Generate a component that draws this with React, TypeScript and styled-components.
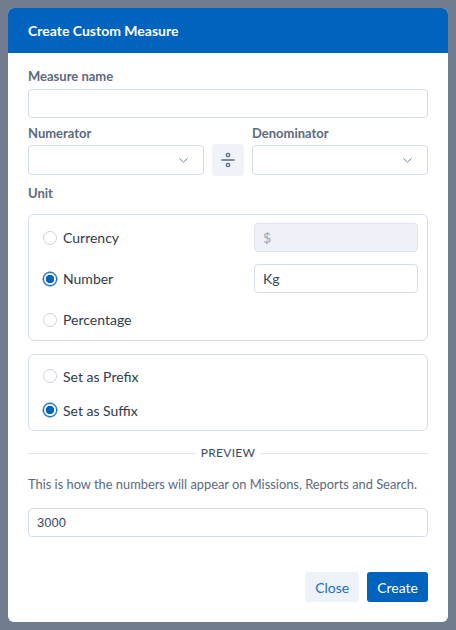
import React from "react";
import styled, { createGlobalStyle } from "styled-components";

const GlobalStyle = createGlobalStyle`
  html, body {
    margin: 0;
    padding: 0;
    background: #717d8e;
  }
  body {
    font-family: Lato, "Open Sans", sans-serif;
  }
`;

const Backdrop = styled.div`
  width: 456px;
  height: 630px;
  padding: 8px;
  box-sizing: border-box;
  background: #717d8e;
`;

const Modal = styled.div`
  width: 440px;
  height: 614px;
  background: #fff;
  border-radius: 6px;
  overflow: hidden;
  display: flex;
  flex-direction: column;
`;

const Header = styled.div`
  height: 45px;
  background: #0063be;
  display: flex;
  align-items: center;
  padding: 0 20px;
  color: #fff;
  font-size: 14px;
  font-weight: 700;
`;

const Body = styled.div`
  flex: 1;
  padding: 15px 20px 20px;
  display: flex;
  flex-direction: column;
`;

const Label = styled.div<{ gap?: number }>`
  font-size: 13px;
  font-weight: 700;
  line-height: 16px;
  color: #5b6a7f;
  margin-bottom: ${({ gap }) => gap ?? 4}px;
`;

const Field = styled.div`
  margin-bottom: 7px;
`;

const TextInput = styled.input<{ $disabled?: boolean; $mono?: boolean }>`
  display: block;
  width: 100%;
  height: 29px;
  box-sizing: border-box;
  border: 1px solid ${({ $disabled }) => ($disabled ? "#dde4ee" : "#d3dde9")};
  background: ${({ $disabled }) => ($disabled ? "#eef2f8" : "#fff")};
  border-radius: 4px;
  padding: 0 8px;
  font-family: ${({ $mono }) =>
    $mono ? '"Liberation Sans", Arial, sans-serif' : "Lato, sans-serif"};
  font-size: ${({ $mono }) => ($mono ? 13 : 14)}px;
  color: ${({ $disabled }) => ($disabled ? "#9aa6b5" : "#3a4656")};
  outline: none;
`;

const RatioRow = styled.div`
  display: grid;
  grid-template-columns: 1fr 32px 1fr;
  column-gap: 8px;
  align-items: end;
  margin-bottom: 10px;
`;

const SelectBox = styled.div`
  height: 30px;
  box-sizing: border-box;
  border: 1px solid #d3dde9;
  border-radius: 4px;
  display: flex;
  align-items: center;
  justify-content: flex-end;
  padding-right: 15px;
  color: #7a889b;
`;

const DivideButton = styled.div`
  width: 32px;
  height: 32px;
  border-radius: 4px;
  background: #eff3f9;
  display: flex;
  align-items: center;
  justify-content: center;
  margin-bottom: -1px;
`;

const OptionBox = styled.div<{ $rowHeight: number }>`
  border: 1px solid #d3dde9;
  border-radius: 6px;
  display: grid;
  grid-auto-rows: ${({ $rowHeight }) => $rowHeight}px;
  row-gap: 12px;
  padding: ${({ $rowHeight }) => ($rowHeight > 25 ? "8px 9px 6px 14px" : "10px 9px 9px 14px")};
  margin-bottom: 13px;
`;

const OptionRow = styled.label`
  display: grid;
  grid-template-columns: 1fr 164px;
  align-items: center;
`;

const RadioLabel = styled.span`
  display: flex;
  align-items: center;
  gap: 6px;
  font-size: 14px;
  color: #2f3b4b;
`;

const Radio = styled.span<{ $checked?: boolean }>`
  width: 14px;
  height: 14px;
  box-sizing: border-box;
  border-radius: 50%;
  border: 1px solid ${({ $checked }) => ($checked ? "#0063be" : "#c9d4e3")};
  background: ${({ $checked }) =>
    $checked ? "radial-gradient(circle, #0063be 0 4px, #fff 4.5px)" : "#fff"};
  box-shadow: ${({ $checked }) => ($checked ? "0 0 0 0.5px #0063be" : "none")};
`;

const Divider = styled.div`
  display: flex;
  align-items: center;
  gap: 6px;
  margin: 2px 0 16px;
  font-size: 12px;
  line-height: 14px;
  letter-spacing: 0.3px;
  color: #3a4a5c;

  &::before,
  &::after {
    content: "";
    flex: 1;
    height: 1px;
    background: #e1e6ed;
  }
`;

const Hint = styled.p`
  margin: 0 0 16px;
  font-size: 12.85px;
  line-height: 16px;
  color: #5b6a7f;
`;

const Footer = styled.div`
  margin-top: auto;
  display: flex;
  justify-content: flex-end;
  gap: 8px;
`;

const Button = styled.button<{ $primary?: boolean }>`
  height: 30px;
  border: none;
  border-radius: 3px;
  padding: 0 10px;
  font-family: Lato, sans-serif;
  font-size: 14px;
  background: ${({ $primary }) => ($primary ? "#0063be" : "#eef3fa")};
  color: ${({ $primary }) => ($primary ? "#fff" : "#1a6cc0")};
  cursor: pointer;
`;

const Chevron = () => (
  <svg width="9" height="5" viewBox="0 0 9 5" fill="none">
    <path d="M0.7 0.7l3.8 3.6 3.8-3.6" stroke="currentColor" strokeWidth="1" strokeLinecap="round" strokeLinejoin="round" />
  </svg>
);

const DivideIcon = () => (
  <svg width="14" height="16" viewBox="0 0 14 16" fill="none">
    <circle cx="7" cy="3" r="1.7" stroke="#56677d" strokeWidth="1.3" />
    <line x1="0.5" y1="8" x2="13.5" y2="8" stroke="#56677d" strokeWidth="1.3" />
    <circle cx="7" cy="13" r="1.7" stroke="#56677d" strokeWidth="1.3" />
  </svg>
);

const units = [
  { label: "Currency", value: "$", disabled: true },
  { label: "Number", value: "Kg", checked: true },
  { label: "Percentage" },
];

export default function App() {
  return (
    <>
      <GlobalStyle />
      <Backdrop>
        <Modal>
          <Header>Create Custom Measure</Header>
          <Body>
            <Field>
              <Label gap={5}>Measure name</Label>
              <TextInput />
            </Field>
            <RatioRow>
              <div>
                <Label>Numerator</Label>
                <SelectBox>
                  <Chevron />
                </SelectBox>
              </div>
              <DivideButton>
                <DivideIcon />
              </DivideButton>
              <div>
                <Label>Denominator</Label>
                <SelectBox>
                  <Chevron />
                </SelectBox>
              </div>
            </RatioRow>
            <Label gap={13}>Unit</Label>
            <OptionBox $rowHeight={29}>
              {units.map((u) => (
                <OptionRow key={u.label}>
                  <RadioLabel>
                    <Radio $checked={u.checked} />
                    {u.label}
                  </RadioLabel>
                  {u.value && (
                    <TextInput $disabled={u.disabled} defaultValue={u.value} readOnly={u.disabled} />
                  )}
                </OptionRow>
              ))}
            </OptionBox>
            <OptionBox $rowHeight={22}>
              <RadioLabel>
                <Radio />
                Set as Prefix
              </RadioLabel>
              <RadioLabel>
                <Radio $checked />
                Set as Suffix
              </RadioLabel>
            </OptionBox>
            <Divider>PREVIEW</Divider>
            <Hint>This is how the numbers will appear on Missions, Reports and Search.</Hint>
            <TextInput $mono defaultValue="3000" />
            <Footer>
              <Button>Close</Button>
              <Button $primary>Create</Button>
            </Footer>
          </Body>
        </Modal>
      </Backdrop>
    </>
  );
}
